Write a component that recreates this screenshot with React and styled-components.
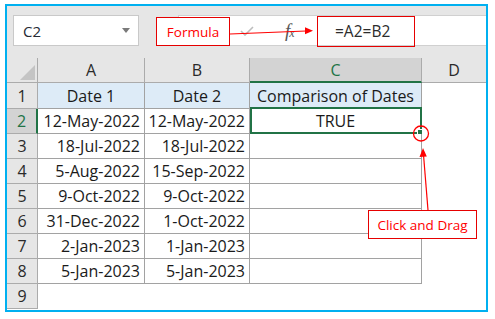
import React from 'react';
import styled, { createGlobalStyle } from 'styled-components';

const GlobalStyle = createGlobalStyle`
  html, body { margin: 0; padding: 0; background: #fff; }
  body { font-family: 'Open Sans', 'Liberation Sans', sans-serif; }
  * { box-sizing: border-box; }
`;

const Frame = styled.div`
  position: relative;
  margin: 4px 0 0 5px;
  width: 483px;
  height: 308px;
  border: 2px solid #00b0f0;
  overflow: hidden;
  display: flex;
  flex-direction: column;
  background: #fff;
`;

const FormulaBar = styled.div`
  flex: none;
  height: 52px;
  background: #e6e6e6;
  display: flex;
  align-items: flex-start;
  padding: 9px 0 0 6px;
`;

const NameBox = styled.div`
  width: 126px;
  height: 31px;
  background: #fff;
  border: 1px solid #c9c9c9;
  display: flex;
  align-items: center;
  justify-content: space-between;
  padding: 0 8px 0 9px;
  font-size: 15px;
  color: #262a33;
`;

const Caret = styled.span`
  width: 0;
  height: 0;
  border-left: 4px solid transparent;
  border-right: 4px solid transparent;
  border-top: 5px solid #7a7a7a;
`;

const FormulaArea = styled.div`
  flex: 1;
  height: 31px;
  margin-left: 39px;
  background: #fff;
  border: 1px solid #d0d0d0;
  border-right: none;
  display: flex;
  align-items: center;
`;

const CheckIcon = styled.svg`
  margin-left: 61px;
  flex: none;
`;

const Fx = styled.span`
  width: 16px;
  margin-left: 31px;
  font-family: 'Liberation Serif', serif;
  font-style: italic;
  font-size: 19px;
  color: #575757;
  letter-spacing: -1px;

  small {
    font-size: 12px;
  }
`;

const FormulaText = styled.span`
  margin-left: 34px;
  font-size: 15.5px;
  color: #2c2c2c;
`;

const Sheet = styled.div`
  display: grid;
  grid-template-columns: 31px 107px 105px 172px 1fr;
  grid-template-rows: 25px 26px repeat(8, 25px);
  font-size: 16px;
  color: #1a1a1a;
`;

const Corner = styled.div`
  background: #e6e6e6;
  border-right: 1px solid #ababab;
  border-bottom: 1px solid #ababab;
  display: flex;
  align-items: flex-end;
  justify-content: flex-end;
  padding: 0 2px 2px 0;

  &::after {
    content: '';
    width: 0;
    height: 0;
    border-left: 15px solid transparent;
    border-bottom: 15px solid #c4c4c4;
  }
`;

const ColHead = styled.div`
  background: ${p => (p.$active ? '#d3d3d3' : '#e6e6e6')};
  color: ${p => (p.$active ? '#217346' : '#2a2a2a')};
  border-right: ${p => (p.$last ? 'none' : '1px solid #ababab')};
  border-bottom: ${p => (p.$active ? '2px solid #217346' : '1px solid #ababab')};
  display: flex;
  align-items: center;
  justify-content: center;
`;

const RowHead = styled.div`
  background: ${p => (p.$active ? '#d3d3d3' : '#e6e6e6')};
  color: ${p => (p.$active ? '#217346' : '#2a2a2a')};
  border-right: ${p => (p.$active ? '2px solid #217346' : '1px solid #ababab')};
  border-bottom: 1px solid #ababab;
  display: flex;
  align-items: center;
  justify-content: center;
`;

const Cell = styled.div`
  position: relative;
  background: ${p => (p.$fill ? '#ddebf7' : '#fff')};
  border-right: ${p => (p.$boxed ? '1px solid #a2a2a2' : 'none')};
  border-bottom: ${p => (p.$boxed ? '1px solid #a2a2a2' : 'none')};
  display: flex;
  align-items: center;
  justify-content: ${p => (p.$align === 'center' ? 'center' : 'flex-end')};
  padding: 0 4px;
  white-space: nowrap;
`;

const Selection = styled.div`
  position: absolute;
  top: -2px;
  left: 0;
  right: -1px;
  bottom: -1px;
  border: 2px solid #217346;
`;

const FillHandle = styled.div`
  position: absolute;
  right: -5px;
  bottom: -5px;
  width: 8px;
  height: 8px;
  background: #217346;
  border: 1px solid #fff;
`;

const Overlay = styled.svg`
  position: absolute;
  inset: 0;
  pointer-events: none;
  z-index: 2;
`;

const Callout = styled.div`
  position: absolute;
  z-index: 3;
  left: ${p => p.$x}px;
  top: ${p => p.$y}px;
  width: ${p => p.$w}px;
  height: ${p => p.$h}px;
  border: 1px solid #e60000;
  background: ${p => (p.$hollow ? 'transparent' : '#fff')};
  color: #f00;
  font-size: 13.5px;
  display: flex;
  align-items: center;
  justify-content: center;
`;

const rows = [
  ['Date 1', 'Date 2', 'Comparison of Dates'],
  ['12-May-2022', '12-May-2022', 'TRUE'],
  ['18-Jul-2022', '18-Jul-2022', ''],
  ['5-Aug-2022', '15-Sep-2022', ''],
  ['9-Oct-2022', '9-Oct-2022', ''],
  ['31-Dec-2022', '1-Oct-2022', ''],
  ['2-Jan-2023', '1-Jan-2023', ''],
  ['5-Jan-2023', '5-Jan-2023', ''],
];

const App = () => {
  return (
    <>
      <GlobalStyle />
      <Frame>
        <FormulaBar>
          <NameBox>
            C2
            <Caret />
          </NameBox>
          <FormulaArea>
            <CheckIcon width="14" height="10" viewBox="0 0 14 10">
              <polyline points="1,5 5,9 13,1" fill="none" stroke="#bdbdbd" strokeWidth="1.6" />
            </CheckIcon>
            <Fx>f<small>x</small></Fx>
            <FormulaText>=A2=B2</FormulaText>
          </FormulaArea>
        </FormulaBar>

        <Sheet>
          <Corner />
          <ColHead>A</ColHead>
          <ColHead>B</ColHead>
          <ColHead $active>C</ColHead>
          <ColHead $last>D</ColHead>

          {rows.map((row, i) => (
            <React.Fragment key={i}>
              <RowHead $active={i === 1}>{i + 1}</RowHead>
              <Cell $boxed $fill={i === 0} $align={i === 0 ? 'center' : 'right'}>{row[0]}</Cell>
              <Cell $boxed $fill={i === 0} $align={i === 0 ? 'center' : 'right'}>{row[1]}</Cell>
              <Cell $boxed $fill={i === 0} $align="center">
                {row[2]}
                {i === 1 && (
                  <Selection>
                    <FillHandle />
                  </Selection>
                )}
              </Cell>
              <Cell />
            </React.Fragment>
          ))}
          <RowHead>9</RowHead>
          <Cell />
          <Cell />
          <Cell />
          <Cell />
        </Sheet>

        <Overlay width="479" height="304">
          <line x1="223" y1="28" x2="299" y2="25" stroke="#f00" strokeWidth="1.2" />
          <polygon points="306,24.7 298,21.3 298,28.3" fill="#f00" />
          <circle cx="414" cy="127.5" r="7.5" fill="none" stroke="#f00" strokeWidth="1.3" />
          <line x1="421" y1="204" x2="416.6" y2="150" stroke="#f00" strokeWidth="1.2" />
          <polygon points="416,142 412.5,151 419.8,150.6" fill="#f00" />
        </Overlay>

        <Callout $x={310} $y={10} $w={98} $h={31} $hollow />
        <Callout $x={149} $y={11} $w={74} $h={29}>Formula</Callout>
        <Callout $x={361} $y={204} $w={109} $h={29}>Click and Drag</Callout>
      </Frame>
    </>
  );
};

export default App;
